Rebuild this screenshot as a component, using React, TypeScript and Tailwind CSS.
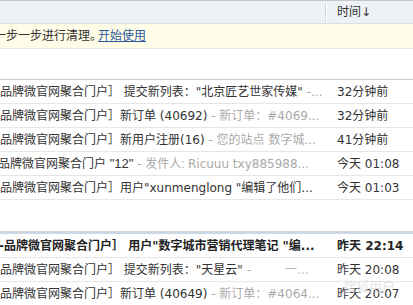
import React from "react";

const font = { fontFamily: '"DejaVu Sans", "Noto Sans CJK SC", sans-serif' };

type Row = { dark: React.ReactNode; gray?: React.ReactNode; time: string; bold?: boolean; shift?: string };

const narrow = { fontFamily: '"Liberation Sans", "Noto Sans CJK SC", sans-serif' };

const group1: Row[] = [
  { dark: "品牌微官网聚合门户］ 提交新列表：\"北京匠艺世家传媒\"", gray: " -...", time: "32分钟前" },
  { dark: "品牌微官网聚合门户］新订单 (40692)", gray: " - 新订单：#4069...", time: "32分钟前" },
  { dark: "品牌微官网聚合门户］新用户注册(16)", gray: " - 您的站点 数字城...", time: "41分钟前" },
  {
    dark: (
      <>
        品牌微官网聚合门户<span style={narrow} className="text-[13px]"> "12"</span>
      </>
    ),
    gray: (
      <>
        {" - 发件人"}<span style={narrow}>: </span>Ricuuu txy885988...
      </>
    ),
    time: "今天 01:08",
    shift: "ml-[-2px]",
  },
  { dark: "品牌微官网聚合门户］用户\"xunmenglong \"编辑了他们...", time: "今天 01:03" },
];

const group2: Row[] = [
  { dark: "-品牌微官网聚合门户］ 用户\"数字城市营销代理笔记 \"编...", time: "昨天 22:14", bold: true, shift: "ml-[-1px]" },
  {
    dark: "品牌微官网聚合门户］ 提交新列表：\"天星云\"",
    gray: (
      <>
        {" -"}
        <span className="ml-[34px] text-[#b8b8b8]">一...</span>
      </>
    ),
    time: "昨天 20:08",
  },
  { dark: "品牌微官网聚合门户］新订单 (40649)", gray: " - 新订单：#4064...", time: "昨天 20:07" },
];

function RowView({ r, last }: { r: Row; last?: boolean }) {
  return (
    <div className={`flex h-[24px] items-center ${last ? "" : "border-b border-[#e6e6e6]"}`}>
      <div className="w-[326px] shrink-0 overflow-hidden whitespace-nowrap pr-[6px]">
        <span className={`inline-block ${r.shift ?? ""} ${r.bold ? "font-bold text-[#222]" : "text-[#333]"}`}>{r.dark}</span>
        {r.gray && <span className="text-[#aaa]">{r.gray}</span>}
      </div>
      <div className={`pl-[11px] whitespace-nowrap ${r.bold ? "font-bold text-[#222]" : "text-[#333]"}`}>{r.time}</div>
    </div>
  );
}

export default function App() {
  return (
    <div className="relative w-[413px] h-[305px] overflow-hidden bg-white text-[12px]" style={font}>
      {/* header */}
      <div className="flex h-[24px] border-t border-[#c2c8ce] border-b border-b-[#dcdfe2] bg-[#eff2f5]">
        <div className="w-[326px] shrink-0 flex items-center justify-end">
          <div className="h-[19px] w-[1px] bg-[#d3d8dd] mt-[1px]" />
        </div>
        <div className="w-[1px] h-[19px] mt-[2px] bg-white" />
        <div className="pl-[10px] flex items-center text-[#333]">时间↓</div>
      </div>
      {/* notice */}
      <div className="h-[25px] flex items-center bg-[#fffde8] border-b border-[#e8e8e8] whitespace-nowrap text-[#333]">
        <span className="ml-[-6px]">一步一步进行清理。</span>
        <span className="ml-[-4px] text-[#2b5a9b] underline">开始使用</span>
      </div>
      <div className="h-[31px] border-b border-[#c9cdd1]" />
      <div>
        {group1.map((r, i) => (
          <RowView key={i} r={r} />
        ))}
      </div>
      <div className="h-[31px]" />
      <div className="border-t-[3px] border-[#cbd7e2]">
        {group2.map((r, i) => (
          <RowView key={i} r={r} last={i === group2.length - 1} />
        ))}
      </div>
      <div className="absolute left-[343px] top-[277px] text-[13px] text-[#dcdcdc] opacity-70 whitespace-nowrap">
        搜狐用户
      </div>
    </div>
  );
}
